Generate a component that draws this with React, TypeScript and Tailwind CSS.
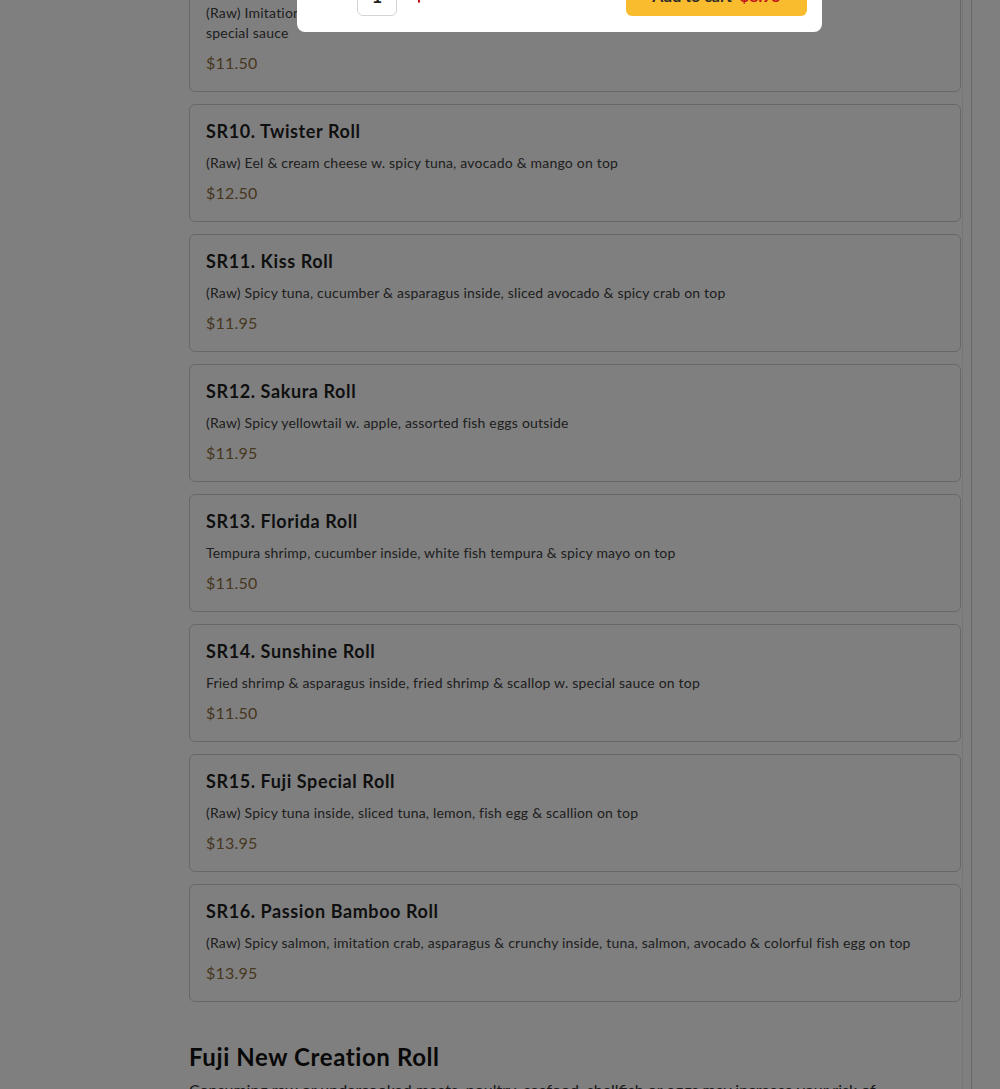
import React from 'react';
import { Minus, Plus } from 'lucide-react';

const rolls = [
  {
    name: 'SR9. Crazy Roll',
    desc: "(Raw) Imitation crab, cucumber & avocado inside, topped w. spicy tuna, crunchy, scallion & chef's",
    desc2: 'special sauce',
    price: '11.50',
  },
  { name: 'SR10. Twister Roll', desc: '(Raw) Eel & cream cheese w. spicy tuna, avocado & mango on top', price: '12.50' },
  { name: 'SR11. Kiss Roll', desc: '(Raw) Spicy tuna, cucumber & asparagus inside, sliced avocado & spicy crab on top', price: '11.95' },
  { name: 'SR12. Sakura Roll', desc: '(Raw) Spicy yellowtail w. apple, assorted fish eggs outside', price: '11.95' },
  { name: 'SR13. Florida Roll', desc: 'Tempura shrimp, cucumber inside, white fish tempura & spicy mayo on top', price: '11.50' },
  { name: 'SR14. Sunshine Roll', desc: 'Fried shrimp & asparagus inside, fried shrimp & scallop w. special sauce on top', price: '11.50' },
  { name: 'SR15. Fuji Special Roll', desc: '(Raw) Spicy tuna inside, sliced tuna, lemon, fish egg & scallion on top', price: '13.95' },
  {
    name: 'SR16. Passion Bamboo Roll',
    desc: '(Raw) Spicy salmon, imitation crab, asparagus & crunchy inside, tuna, salmon, avocado & colorful fish egg on top',
    price: '13.95',
  },
];

export default function App() {
  return (
    <div className="h-[1089px] overflow-hidden bg-white font-['Lato','Noto_Sans',sans-serif] relative">
      <div className="flex -mt-[46px]">
        {/* Category sidebar (empty in view) */}
        <aside className="w-[189px] shrink-0" />

        <main className="w-[782px] shrink-0">
          <div className="w-[774px] border-r border-[#ececec]">
            <div className="w-[772px] flex flex-col gap-3">
              {rolls.map((r) => (
                <div key={r.name} className="border border-[#cfcfcf] rounded-md px-4 pt-4 pb-4 bg-white">
                  <h3 className="text-[18px] leading-[20px] font-bold tracking-[0.6px] text-[#1f1f1f]">{r.name}</h3>
                  <p className="mt-3 text-[14px] leading-[20px] tracking-[0.2px] text-[#404040]">
                    {r.desc}
                    {r.desc2 && (
                      <>
                        <br />
                        {r.desc2}
                      </>
                    )}
                  </p>
                  <p className="mt-2 text-[16px] leading-[24px] tracking-[0.2px] text-[#8f703f]">${r.price}</p>
                </div>
              ))}
            </div>
            <h2 className="mt-[39px] text-[24px] leading-[32px] font-bold tracking-[0.6px] text-[#111]">
              Fuji New Creation Roll
            </h2>
            <p className="mt-[5px] text-[16px] leading-[24px] text-[#333] pr-16">
              Consuming raw or undercooked meats, poultry, seafood, shellfish or eggs may increase your risk of
              foodborne illness.
            </p>
          </div>
        </main>

        {/* Cart column */}
        <aside className="flex-1 border-l border-[#cfcfcf] h-[1200px]" />
      </div>

      {/* Dim overlay */}
      <div className="fixed inset-0 bg-black/50" />

      {/* Item modal, scrolled partly out of view */}
      <div className="fixed left-[297px] top-[-120px] w-[525px] h-[152px] bg-white rounded-b-lg flex flex-col justify-end">
        <div className="flex items-end justify-between pl-[22px] pr-[15px] pb-4">
          <div className="flex items-end">
            <button className="w-[24px] h-[40px] flex items-center justify-center text-[#9a9a9a]">
              <Minus className="w-4 h-4" strokeWidth={2.5} />
            </button>
            <div className="ml-[14px] w-[40px] h-[40px] border border-[#d4d4d4] rounded-md flex items-center justify-center text-[18px] font-bold text-[#222]">
              1
            </div>
            <button className="ml-[12px] w-[20px] h-[40px] flex items-center justify-center text-[#c4161c]">
              <Plus className="w-5 h-5" strokeWidth={2.5} />
            </button>
          </div>
          <button className="w-[181px] h-[40px] rounded-md bg-[#f9bc2f] flex items-center justify-center gap-2 text-[16px] font-bold">
            <span className="text-[#2a2a2a]">Add to cart</span>
            <span className="text-[#c4161c]">$8.95</span>
          </button>
        </div>
      </div>
    </div>
  );
}
